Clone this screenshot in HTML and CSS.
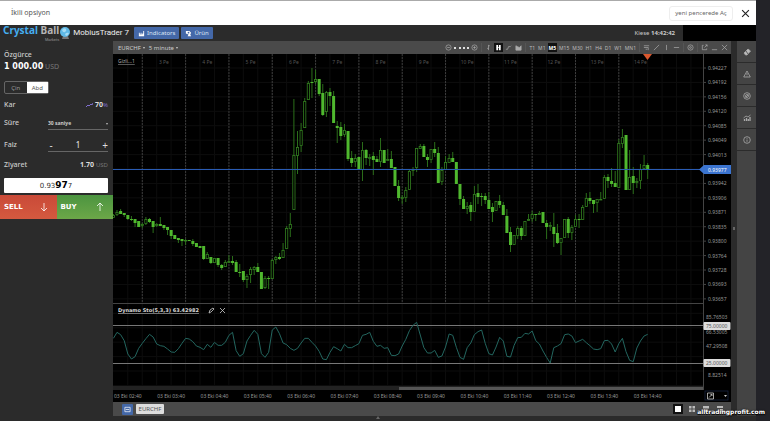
FILE: index.html
```html
<!DOCTYPE html>
<html lang="tr">
<head>
  <meta charset="UTF-8">
  <meta name="viewport" content="width=device-width, initial-scale=1.0">
  <title>İkili opsiyon</title>
  <link rel="stylesheet" href="styles.css">
</head>
<body>
  <div class="window">
    <div class="title-bar">
      <h1>İkili opsiyon</h1>
      <button class="open-new">yeni pencerede Aç</button>
      <button class="close" aria-label="Kapat">
        <svg viewBox="0 0 8 8"><path d="M1 1l6 6M7 1L1 7"/></svg>
      </button>
    </div>

    <header class="header">
      <div class="logo">
        <div><span class="crystal">Crystal</span> <span class="ball">Ball</span></div>
        <small>Markets</small>
      </div>
      <svg class="logo-ball" viewBox="0 0 10 14">
        <path d="M3 10h5l1 3H2z" fill="#777"/>
        <circle cx="5" cy="6" r="5" fill="#5fb9e6"/>
        <path d="M2 4q2-3 4-1 1 2-1 3t-3-2zM5 8q2-2 4-1-1 3-3 3z" fill="#a5dcf4"/>
      </svg>
      <span class="brand">MobiusTrader 7</span>
      <button class="blue">
        <svg viewBox="0 0 8 8"><path d="M1 3v4h6V1H6v3H5v1H4V3H3v2H2V3z" fill="#fff"/></svg>
        Indicators
      </button>
      <button class="blue">
        <svg viewBox="0 0 8 8"><path d="M1 1h4l2 2-1 2 1 2H3l1-2-3-1z" fill="#fff"/><circle cx="4" cy="3" r="1" fill="#4468a8"/></svg>
        Ürün
      </button>
      <span class="clock">Kiese <b>14:42:42</b></span>
      <div class="account"></div>
    </header>

    <div class="workspace">
      <aside class="sidebar">
        <div class="label">Özgürce</div>
        <div class="balance"><b>1 000.00</b> <span>USD</span></div>
        <div class="switch">
          <button>Çin</button><button class="on">Abd</button>
        </div>
        <div class="row">
          <span class="label">Kar</span>
          <span class="value"><svg class="trend" viewBox="0 0 7 6"><path d="M0 5l2-2 1 1 2-2 1 1 1-2"/></svg> 70<i>%</i></span>
        </div>
        <div class="row">
          <label for="period">Süre</label>
          <span class="field">
            <select id="period"><option>30 saniye</option></select>
          </span>
        </div>
        <div class="row tall">
          <label for="amount">Faiz</label>
          <span class="field stepper">
            <button aria-label="Azalt">-</button>
            <input id="amount" type="text" value="1">
            <button aria-label="Artır">+</button>
          </span>
        </div>
        <div class="row short">
          <span class="label">Ziyaret</span>
          <span class="value">1.70 <em>USD</em></span>
        </div>
        <div class="quote">0.93<b>97</b>7</div>
        <div class="trade">
          <button class="sell">SELL <svg viewBox="0 0 8 10"><path d="M4 1v8M1 6l3 3 3-3"/></svg></button>
          <button class="buy">BUY <svg viewBox="0 0 8 10"><path d="M4 9V1M1 4l3-3 3 3"/></svg></button>
        </div>
      </aside>

      <main class="chart-panel">
        <div class="chart-bar">
          <button>EURCHF <span class="caret"></span></button>
          <button>5 minute <span class="caret"></span></button>
          <div class="tools">
            <button aria-label="Uzaklaştır"><svg viewBox="0 0 8 8"><circle cx="4" cy="4" r="3"/><path d="M2.5 4h3"/></svg></button>
            <span class="dots"></span>
            <button aria-label="Yakınlaştır"><svg viewBox="0 0 8 8"><circle cx="4" cy="4" r="3"/><path d="M2.5 4h3M4 2.5v3"/></svg></button>
            <span class="sep"></span>
            <button aria-label="Çubuk"><svg viewBox="0 0 8 8"><path d="M4 1v6M4 2h1.5M2.5 5H4"/></svg></button>
            <button class="on" aria-label="Mum"><svg viewBox="0 0 8 8"><path d="M2.5 1v6M5.5 1v6" stroke-width="2"/><path d="M2 4h4"/></svg></button>
            <button aria-label="Çizgi"><svg viewBox="0 0 8 8"><path d="M1 6h2l1-3h2l1-1"/></svg></button>
            <button aria-label="Alan"><svg viewBox="0 0 8 8"><path d="M1 2v5h6V2L5 4 3 3z" fill="#aaa"/></svg></button>
            <span class="sep"></span>
            <button>T1</button><button>M1</button><button class="on">M5</button><button>M15</button><button>M30</button><button>H1</button><button>H4</button><button>D1</button><button>W1</button><button>MN1</button>
            <span class="sep"></span>
          </div>
          <div class="draw">
            <button aria-label="Göstergeler"><svg viewBox="0 0 8 8"><path d="M1 2h6M1 4h5M3 6h2M6 4v3"/></svg></button>
            <button aria-label="Trend"><svg viewBox="0 0 8 8"><path d="M1 7l6-6"/></svg></button>
            <button aria-label="Dikey"><svg viewBox="0 0 8 8"><path d="M4 1v6"/></svg></button>
            <button aria-label="Yatay"><svg viewBox="0 0 8 8"><path d="M1 4h6"/></svg></button>
            <span class="sep"></span>
            <button aria-label="Ayarlar"><svg viewBox="0 0 8 8"><circle cx="4" cy="4" r="3"/><circle cx="4" cy="4" r="1"/></svg></button>
            <span class="sep"></span>
            <button aria-label="Ayır"><svg viewBox="0 0 8 8"><path d="M3 1.5H1.5v5h5V5M4 4l3-3M5 1h2v2"/></svg></button>
            <button aria-label="Küçült"><svg viewBox="0 0 8 8"><path d="M1 6.5h6"/></svg></button>
            <button aria-label="Grafiği kapat"><svg viewBox="0 0 8 8"><path d="M1 1l6 6M7 1L1 7"/></svg></button>
          </div>
        </div>
        <div class="chart">
          <svg id="chart" viewBox="113 54 618 348"></svg>
        </div>
        <div class="tabs">
          <button class="tab-menu" aria-label="Pencereler"><svg viewBox="0 0 8 8"><path d="M1 1.5h6v5H1zM2 4h4"/></svg></button>
          <button class="tab">EURCHF</button>
          <div class="layouts">
            <button class="on" aria-label="Tek"><svg viewBox="0 0 8 8"><path d="M1 1h6v6H1z"/></svg></button>
            <button aria-label="Dörtlü"><svg viewBox="0 0 8 8"><path d="M1 1h2.5v2.5H1zM4.5 1H7v2.5H4.5zM1 4.5h2.5V7H1zM4.5 4.5H7V7H4.5z"/></svg></button>
            <button aria-label="Yatay bölme"><svg viewBox="0 0 8 8"><path d="M1 1h6v2.5H1zM2 4.5h4V7H2z"/></svg></button>
            <button aria-label="Dikey bölme"><svg viewBox="0 0 8 8"><path d="M1 1h6v2H1zM4 4h3v3H4z"/></svg></button>
          </div>
        </div>
      </main>

      <div class="splitter"><span></span></div>

      <nav class="side-tools">
        <button aria-label="Silgi"><svg viewBox="0 0 8 8"><path d="M1 5l4-4 2.5 2L4 7H2.5z" fill="#bbb"/><path d="M3 3l2 3" stroke="#444"/></svg></button>
        <button aria-label="Uyarı"><svg viewBox="0 0 8 8"><path d="M4 1l3.3 6H.7zM4 3v2M4 5.7v.6"/></svg></button>
        <button aria-label="Hedef"><svg viewBox="0 0 8 8"><circle cx="4" cy="4" r="3.3"/><circle cx="4" cy="4" r="1.5"/><path d="M2.5 5.5l3-3"/></svg></button>
        <button aria-label="Göstergeler"><svg viewBox="0 0 8 8"><path d="M1.5 7V5M3.5 7V4M5.3 7V5M7 7V3" stroke-width="1.3"/><path d="M.5 4L3 2l2 1 2.5-2"/></svg></button>
        <button aria-label="Bilgi"><svg viewBox="0 0 8 8"><circle cx="4" cy="4" r="3.3"/><path d="M4 3.5v2.3M4 2v.8"/></svg></button>
      </nav>
    </div>
    <footer class="drawer"><span></span></footer>
  </div>
  <div class="watermark">alltradingprofit.com</div>
  <script src="chart.js"></script>
</body>
</html>
```

FILE: styles.css
```css
* { margin: 0; padding: 0; box-sizing: border-box; }
body {
  background: #232328;
  font-family: "Noto Sans", "Open Sans", sans-serif;
  font-size: 6px;
  line-height: 8px;
  color: #ccc;
  overflow: hidden;
}
button, input, select {
  font: inherit;
  color: inherit;
  background: none;
  border: none;
}
button { cursor: pointer; }
svg { display: block; fill: none; stroke: #aaa; stroke-width: 0.8; }

.window {
  display: flex;
  flex-direction: column;
  min-height: 100vh;
  margin-right: 14px;
  background: #2b2b2b;
}

/* Title bar */
.title-bar {
  display: flex;
  align-items: center;
  height: 25px;
  padding: 0 6px 0 11px;
  background: #fff;
  border-top: 1px solid #aaa;
  color: #555;
}
.title-bar h1 { font-size: 7px; font-weight: normal; margin-right: auto; }
.open-new {
  height: 15px;
  width: 64px;
  white-space: nowrap;
  border: 1px solid #eee;
  border-radius: 3px;
  color: #666;
}
.close { margin-left: 8px; }
.close svg { width: 9px; height: 9px; stroke: #222; stroke-width: 1; }

/* Header */
.header {
  display: flex;
  align-items: center;
  height: 16px;
  padding-left: 3px;
}
.logo {
  font-size: 10px;
  font-weight: bold;
  line-height: 13px;
  white-space: nowrap;
}
.crystal { color: #45aef0; }
.ball { color: #b5b5b5; }
.logo small {
  display: block;
  font-family: "Liberation Sans", sans-serif;
  font-size: 4px;
  line-height: 5px;
  font-weight: normal;
  text-align: right;
  color: #999;
}
.logo-ball { width: 10px; height: 14px; margin: 0 3px 0 1px; stroke: none; }
.brand { font-family: Roboto, sans-serif; font-size: 8px; color: #eee; margin-right: 5px; white-space: nowrap; }
.blue {
  display: flex;
  align-items: center;
  gap: 2px;
  height: 12px;
  padding: 0 4px;
  margin-right: 2px;
  border-radius: 1px;
  background: #4468a8;
  color: #dde6f5;
}
.blue svg { width: 7px; height: 7px; stroke: none; }
.clock { margin-left: auto; margin-right: 8px; }
.account { width: 73px; height: 16px; background: #000; }

.workspace { display: flex; flex: 1; }

/* Order form */
.sidebar { width: 113px; flex-shrink: 0; padding-top: 10px; }
.sidebar .label, .sidebar label { font-size: 7px; font-weight: 500; color: #ccc; }
.sidebar > .label { padding-left: 4px; }
.balance { padding: 0 4px; font-size: 7px; line-height: 16px; color: #777; }
.balance b { font-family: "DejaVu Sans", sans-serif; font-size: 8px; color: #fff; }
.switch { display: flex; width: 45px; height: 13px; margin: 6px 4px 2px; border: 1px solid #666; border-radius: 2px; }
.switch button { flex: 1; color: #999; }
.switch .on { background: #fff; color: #555; }
.row {
  display: flex;
  align-items: center;
  justify-content: space-between;
  height: 18px;
  padding: 0 5px 0 4px;
}
.row.tall { height: 26px; }
.row.short { height: 14px; margin-bottom: 6px; }
.value { display: flex; align-items: center; gap: 2px; font-size: 7px; font-weight: bold; color: #ddd; }
.value i, .value em { font-style: normal; font-weight: normal; font-size: 6px; color: #777; }
.value i { color: #7f6fd0; margin-left: -2px; }
.trend { width: 7px; height: 6px; stroke: #7f6fd0; stroke-width: 1; }
.field { position: relative; display: flex; width: 60px; height: 13px; border-bottom: 1px solid #666; }
.field select {
  width: 100%;
  appearance: none;
  font-size: 5px;
  font-weight: bold;
  color: #ccc;
}
.field:not(.stepper)::after {
  content: "";
  position: absolute;
  right: 0;
  top: 6px;
  border: 1px solid transparent;
  border-top: 2px solid #bbb;
}
.stepper button { width: 6px; font-size: 10px; color: #ddd; }
.stepper input { flex: 1; min-width: 0; text-align: center; font-size: 8px; color: #eee; }
.quote {
  height: 15px;
  margin: 0 5px 2px 4px;
  background: #fff;
  border-radius: 1px;
  color: #333;
  font-family: "DejaVu Sans", sans-serif;
  font-size: 7px;
  line-height: 15px;
  text-align: center;
}
.quote b { font-size: 9px; color: #000; }
.trade { display: flex; }
.trade button {
  flex: 1;
  display: flex;
  align-items: center;
  justify-content: space-between;
  height: 24px;
  padding: 0 9px 0 4px;
  font-family: "DejaVu Sans", sans-serif;
  font-size: 7px;
  font-weight: bold;
  color: #fff;
}
.trade svg { width: 8px; height: 10px; stroke: #fff; }
.sell { background: linear-gradient(#c94a38, #d4593f); }
.buy { background: linear-gradient(#4c9440, #6ca748); }

/* Chart */
.chart-panel { flex: 1; min-width: 0; }
.chart-bar {
  display: flex;
  align-items: center;
  height: 13px;
  padding: 0 3px 0 5px;
  background: #4a4a4a;
  white-space: nowrap;
}
.chart-bar > button { display: flex; align-items: center; gap: 2px; margin-right: 4px; }
.chart-bar svg { width: 7px; height: 7px; }
.caret { margin-top: 1px; border: 1px solid transparent; border-top: 2px solid #ccc; }
.tools {
  display: flex;
  align-items: center;
  gap: 1px;
  margin-left: auto;
  margin-right: 2px;
  font-size: 5px;
  color: #bbb;
}
.draw { display: flex; align-items: center; gap: 3px; }
.tools button { height: 9px; padding: 0 1px; }
.tools .on { background: #111; color: #fff; font-weight: bold; }
.tools .on svg { stroke: #fff; }
.dots { width: 15px; border-top: 2px dotted #ddd; }
.sep { width: 1px; height: 9px; background: #555; }
.tools .sep { margin: 0 1px; }
.chart { background: #000; }
.chart svg { width: 100%; height: auto; }
.chart text { font-size: 5px; stroke: none; fill: #999; }
.chart .center { text-anchor: middle; }
.chart .day { fill: #555; }
.chart .title {
  font-family: "DejaVu Sans", sans-serif;
  font-weight: bold;
  fill: #ddd;
  text-decoration: underline;
}
.chart .name { fill: #aaa; text-decoration: underline; }
.chart .tag-text { fill: #fff; }
.chart .level-text { fill: #555; }
.grid { stroke: #0d0d0d; stroke-width: 1; }
.day-line { stroke: #3c3c3c; stroke-width: 1; stroke-dasharray: 2 1; }
.border { stroke: #444; stroke-width: 1; }
.level { stroke: #777; stroke-width: 1; }
.price-line { stroke: #2a5cb4; stroke-width: 1; }
.wick { stroke: #2b6e1a; stroke-width: 1; }
.up { fill: #000; stroke: #338020; stroke-width: 0.8; }
.down { fill: #4fb82e; stroke: none; }
.stoch { stroke: #23665f; stroke-width: 1; }
.icon { stroke: #ccc; stroke-width: 0.8; }

.tabs {
  display: flex;
  align-items: center;
  gap: 3px;
  height: 14px;
  padding: 0 6px 0 9px;
  background: #4a4a4a;
}
.tab-menu { width: 11px; height: 11px; padding: 2px; background: #4468a8; border-radius: 1px; }
.tab-menu svg { stroke: #fff; }
.tab { width: 28px; height: 10px; background: #ddd; border-radius: 1px; color: #555; }
.layouts { display: flex; align-items: center; gap: 4px; margin-left: auto; }
.layouts button { width: 10px; height: 10px; padding: 1px; }
.layouts .on { background: #111; }
.layouts svg { fill: #bbb; stroke: none; }
.layouts .on svg { fill: #fff; }

.splitter { display: flex; align-items: center; justify-content: center; width: 6px; }
.splitter span { width: 2px; height: 3px; background: #666; }

.side-tools { width: 19px; background: #444; }
.side-tools button {
  display: flex;
  align-items: center;
  justify-content: center;
  width: 100%;
  height: 22px;
  border-bottom: 1px solid #2b2b2b;
}
.side-tools svg { width: 8px; height: 8px; }

.drawer { height: 5px; display: flex; justify-content: center; background: #2b2b2b; }
.drawer span { border: 2px solid transparent; border-bottom: 3px solid #666; border-top: none; height: 3px; }

.watermark {
  position: absolute;
  right: 5px;
  bottom: 5px;
  font-family: "DejaVu Sans", sans-serif;
  font-size: 6px;
  font-weight: bold;
  color: #fff;
  text-shadow: 0 0 2px #000, 0 1px 1px #000;
}
```

FILE: chart.js
```js
// Candles: body top, body bottom, high, low, 1 = falling
const candles = [
  [215,218,214,218,0],[212,215,210,216,0],[211,214,209,214,1],[213,215,213,217,1],[215,219,215,220,1],[219,220,216,221,1],
  [219,223,219,227,1],[221,227,221,227,1],[224,226,223,228,0],[219,224,217,225,0],[219,222,218,223,1],[221,227,221,233,1],
  [224,226,223,227,0],[224,226,217,226,1],[225,228,225,230,1],[227,230,227,235,1],[230,236,230,239,1],[235,239,235,239,1],
  [238,240,238,243,1],[239,241,239,246,1],[240,241,239,245,0],[240,241,240,241,1],[241,244,239,246,1],[243,247,243,247,1],
  [246,248,246,248,1],[246,259,246,260,1],[254,259,252,259,0],[257,263,257,264,1],[258,263,258,263,0],[258,265,258,267,1],
  [265,268,264,270,1],[262,267,260,267,0],[261,263,255,263,0],[261,263,256,265,1],[262,272,260,272,1],[272,273,264,277,1],
  [271,280,271,282,1],[276,280,274,288,0],[269,275,267,283,0],[267,270,266,275,0],[267,272,263,272,1],[272,289,272,289,1],
  [278,288,276,289,0],[278,279,276,289,1],[260,279,259,279,0],[257,260,256,264,0],[257,259,253,260,1],[250,258,243,258,0],
  [228,249,226,249,0],[224,229,213,237,0],[155,210,99,210,0],[147,156,131,174,0],[130,146,123,152,0],[101,128,98,128,0],
  [83,100,81,100,0],[82,83,68,98,1],[79,82,70,84,0],[79,94,79,96,1],[93,115,84,116,1],[92,112,91,117,0],
  [92,96,88,106,1],[96,123,91,123,1],[126,128,121,143,1],[127,136,122,140,1],[130,135,124,137,0],[131,159,131,161,1],
  [158,163,151,167,1],[158,162,154,167,0],[157,170,157,170,1],[150,170,142,181,0],[150,158,149,165,1],[157,159,154,166,0],
  [156,160,152,175,1],[159,162,156,162,1],[150,162,138,167,0],[150,163,150,163,1],[159,161,149,161,0],[159,168,151,168,1],
  [167,186,167,186,1],[186,198,180,201,1],[197,199,195,204,0],[190,198,187,202,0],[171,190,169,190,0],[169,171,167,176,0],
  [148,168,148,172,0],[146,149,144,149,0],[146,157,144,157,1],[157,160,154,167,1],[149,160,149,163,0],[149,153,142,157,1],
  [153,183,147,183,1],[170,182,167,185,0],[162,170,156,170,0],[158,163,154,163,0],[158,162,152,162,1],[162,184,162,184,1],
  [184,199,184,205,1],[199,209,196,209,1],[206,209,202,214,0],[205,212,202,221,1],[194,212,186,212,0],[193,197,184,204,1],
  [196,197,193,206,1],[196,200,193,204,1],[200,209,192,209,1],[207,212,203,222,1],[201,211,201,211,0],[201,205,195,208,1],
  [205,215,202,215,1],[216,233,209,233,1],[232,245,227,252,1],[235,245,235,245,0],[228,236,226,239,0],[228,236,226,240,1],
  [221,236,221,236,0],[219,221,214,221,0],[214,219,211,222,0],[214,215,214,221,1],[213,215,211,215,0],[212,223,212,223,1],
  [223,227,220,239,1],[225,227,222,231,0],[227,234,213,247,1],[233,243,224,244,1],[238,243,238,255,0],[219,238,219,238,0],
  [219,233,217,238,1],[227,233,225,240,0],[219,227,215,227,0],[219,220,214,228,1],[207,220,205,220,0],[198,207,193,207,0],
  [198,201,192,204,1],[200,204,200,213,1],[199,203,199,212,0],[199,200,192,200,0],[177,199,175,199,0],[177,181,174,188,1],
  [181,184,168,187,1],[183,187,171,187,1],[143,188,139,188,0],[137,144,129,148,0],[135,190,135,190,1],[177,190,150,190,0],
  [176,183,167,194,1],[181,183,178,188,0],[169,181,164,189,0],[165,169,155,169,0],[165,170,163,179,1]
];

// Oscillator line, three units per chart unit
const stoch = [
  115,97,104,122,162,177,170,145,130,116,103,111,132,137,139,147,156,157,146,130,115,117,125,138,142,149,133,142,127,136,
  136,127,106,97,152,169,161,123,106,91,103,161,172,157,90,81,101,129,134,145,151,145,129,115,115,127,138,154,177,179,
  157,140,146,153,133,143,143,137,131,106,103,97,124,139,136,145,143,166,167,162,138,118,92,76,67,105,143,159,159,151,
  172,168,141,102,106,142,172,178,143,129,104,95,90,130,161,165,141,112,123,169,171,136,113,112,100,102,93,122,132,153,
  172,189,143,138,131,104,102,108,128,123,118,128,137,147,149,146,122,121,132,156,131,115,155,181,185,144,123,108,103
];

const prices = ['0.94227', '0.94192', '0.94156', '0.94120', '0.94085', '0.94049', '0.94013', '', '0.93942',
  '0.93906', '0.93871', '0.93835', '0.93800', '0.93764', '0.93728', '0.93693', '0.93657'];

const left = 113.4;
const step = 3.61;
const hour = step * 12;
const rowStep = 14.43;
const out = [];

const line = (cls, x1, y1, x2, y2) => out.push(`<path class="${cls}" d="M${x1} ${y1}L${x2} ${y2}"/>`);
const text = (cls, x, y, s) => out.push(`<text class="${cls}" x="${x}" y="${y}">${s}</text>`);

// Grid
for (let x = 127.8; x < 703; x += hour / 3) line('grid', x, 54, x, 386);
for (let y = 68; y < 386; y += rowStep) line('grid', 113, y, 703, y);

for (let i = 0; i < 12; i++) {
  const x = 142.3 + i * hour;
  line('day-line', x, 54, x, 303);
  text('day center', x + hour / 2, 64, `${i + 3} Pe`);
}

candles.forEach(([top, bottom, high, low, falling], i) => {
  const x = left + i * step;
  line('wick', x, high, x, low);
  const inset = falling ? 0 : 0.4;
  out.push(`<rect class="${falling ? 'down' : 'up'}" x="${x - 1.5 + inset}" y="${top + inset}" width="${3 - inset * 2}" height="${Math.max(bottom - top - inset * 2, 0.6)}"/>`);
});
line('price-line', 113, 169.5, 703, 169.5);

// Price axis
line('border', 703.5, 54, 703.5, 390);
prices.forEach((p, i) => {
  const y = 68 + i * rowStep;
  line('border', 703, y, 706, y);
  text('', 708, y + 2, p);
});
out.push('<path d="M699 169.5l5-4.5h27v9h-27z" fill="#3b74d0" stroke="none"/>');
text('tag-text', 708, 171.5, '0.93977');
out.push('<path d="M643 54h9l-4.5 6z" fill="#d9582f" stroke="none"/>');
text('name', 118, 63, 'Gizli...1');

// Oscillator pane
line('border', 113, 303.5, 703, 303.5);
line('level', 113, 325.5, 703, 325.5);
line('level', 113, 363.5, 703, 363.5);
out.push(`<polyline class="stoch" points="${stoch.map((v, i) => `${left + i * step},${300 + v / 3}`).join(' ')}"/>`);
text('title', 118, 312, 'Dynamo Sto(5,3,3) 63.42982');
out.push('<path class="icon" d="M209 313l1-3 3-2 1 1-3 3zM220 308l5 5M225 308l-5 5"/>');
text('', 706, 319, '85.76503');
text('', 706, 334, '66.53005');
text('', 706, 348, '47.29508');
text('', 708, 377, '8.82514');
[[326, '75.00000'], [363, '25.00000']].forEach(([y, s]) => {
  out.push(`<rect x="703.5" y="${y - 4}" width="27" height="8" rx="1" fill="#ddd" stroke="none"/>`);
  text('level-text', 706, y + 2, s);
});

// Scrollbar and time axis
out.push('<rect x="113" y="386" width="590" height="4" fill="#222" stroke="none"/>');
out.push('<rect x="399" y="387" width="304" height="3" fill="#555" stroke="none"/>');
for (let i = 0; i < 13; i++) {
  text('center', 127.8 + i * hour, 398, `03 Eki ${String(i + 2).padStart(2, '0')}:40`);
}
out.push('<rect x="705" y="391" width="23" height="9" stroke="#182440"/><path class="icon" d="M707.5 393h6v6h-6zM709 397.5l3-3M710.5 394.5H712v1.5"/><path d="M724 395h3l-1.5 2z" fill="#ccc" stroke="none"/>');

document.getElementById('chart').innerHTML = out.join('');
```
